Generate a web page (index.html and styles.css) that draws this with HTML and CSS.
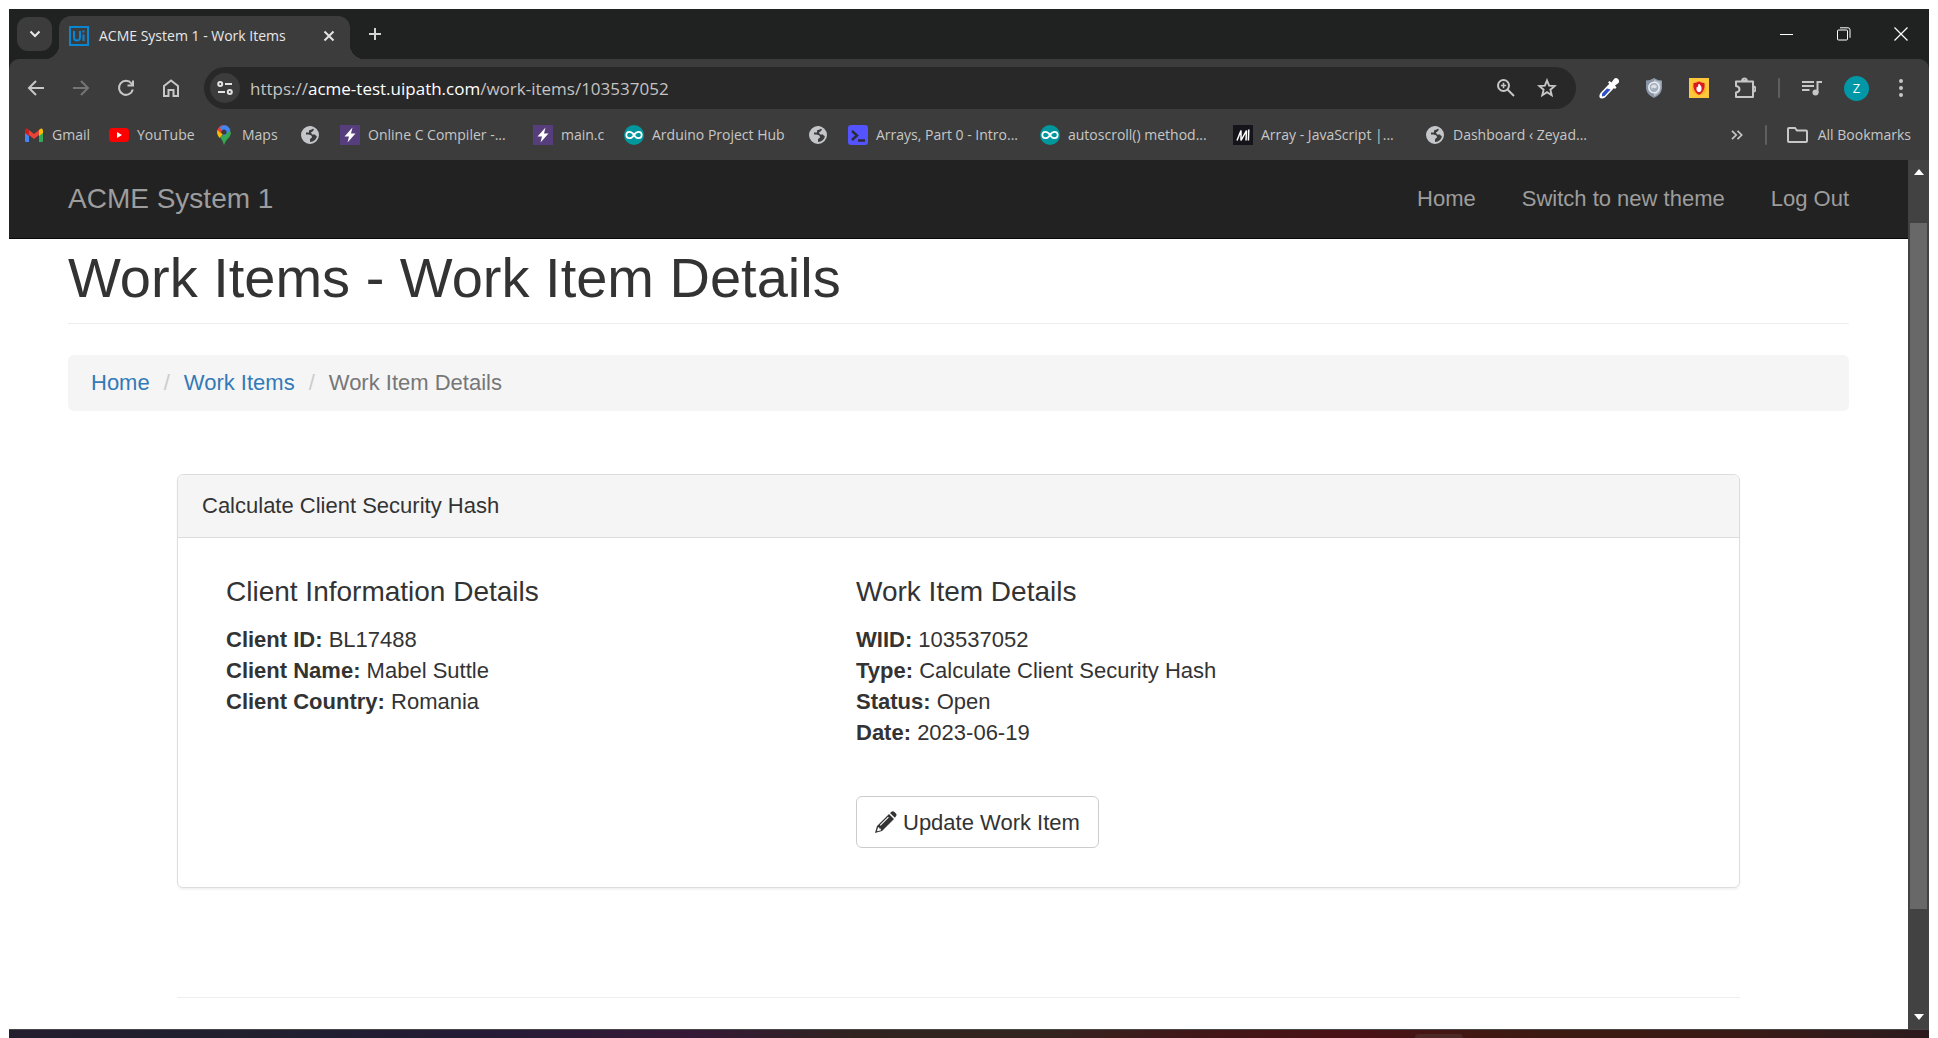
FILE: index.html
```html
<!DOCTYPE html>
<html lang="en">
<head>
<meta charset="utf-8">
<title>ACME System 1 - Work Items</title>
<link rel="stylesheet" href="styles.css">
</head>
<body>
<svg class="defs" aria-hidden="true">
  <symbol id="globe" viewBox="0 0 20 20"><circle cx="10" cy="10" r="8" fill="#3c3c3c" stroke="#c4c6ca" stroke-width="2"/><path fill="#c4c6ca" d="M2 8c1-4 5-7 10-6.500l1 2c-1 1.500-3 1-4 2v2H6v2c3 0 6 0 6 3-1 1-2 1-2 2v3C5 18 1 14 2 8zM14 3.500c3 2 4 5 4 7-1.500 1-2.500 0-3-1h-3l-1-2c1.500-1 3-2 3-4z"/></symbol>
  <symbol id="bolt" viewBox="0 0 20 20"><path fill="#563d7c" d="M0 0h20v20H0z"/><path fill="#fff" d="M12.500 2.500 4.500 11.500h4.500L7.500 17.500 15.500 8.500H11z"/></symbol>
  <symbol id="arduino" viewBox="0 0 20 20"><circle cx="10" cy="10" r="10" fill="#00979d"/><path fill="none" stroke="#fff" stroke-width="1.700" d="M10 10C8.500 7.500 7.200 6.800 5.500 6.800a3.200 3.200 0 0 0 0 6.400C7.200 13.200 8.500 12.500 10 10s2.800-3.200 4.500-3.200a3.200 3.200 0 0 1 0 6.400C12.800 13.200 11.500 12.500 10 10z"/></symbol>
</svg>
<div class="window">
  <header class="tabstrip">
    <button class="tab-search" aria-label="Search tabs"><svg width="12" height="8" viewBox="0 0 12 8"><path d="m1.500 1.500 4.500 4.500 4.500-4.500" fill="none" stroke="#e8e8e8" stroke-width="2"/></svg></button>
    <div class="tab">
      <svg width="20" height="20" viewBox="0 0 20 20" fill="none" stroke="#0a85d1" stroke-width="2"><path d="M1 1h18v18H1z"/><path d="M5 5v6.500a3 3 0 0 0 6 0V5M14.500 8.500V15M14.500 4.500v2"/></svg>
      <span class="tab-title">ACME System 1 - Work Items</span>
      <button class="plain" aria-label="Close tab"><svg width="12" height="12" viewBox="0 0 12 12"><path d="m1.500 1.500 9 9m0-9-9 9" stroke="#e3e3e3" stroke-width="2"/></svg></button>
    </div>
    <button class="plain" aria-label="New tab"><svg width="14" height="14" viewBox="0 0 14 14"><path d="M7 1v12M1 7h12" stroke="#d3d3d3" stroke-width="2"/></svg></button>
    <div class="window-controls">
      <button class="plain" aria-label="Minimize"><svg width="14" height="14" viewBox="0 0 14 14"><path d="M0 7.500h13" stroke="#fff"/></svg></button>
      <button class="plain" aria-label="Restore"><svg width="14" height="14" viewBox="0 0 14 14" fill="none" stroke="#fff"><rect x=".5" y="3" width="10" height="10" rx="1"/><path d="M3 .800h8a2 2 0 0 1 2 2v8"/></svg></button>
      <button class="plain" aria-label="Close"><svg width="14" height="14" viewBox="0 0 14 14"><path d="m.5.500 13 13m0-13-13 13" stroke="#fff" stroke-width="1.200"/></svg></button>
    </div>
  </header>

  <div class="toolbar-frame">
  <div class="toolbar">
    <nav class="nav-buttons" aria-label="Browser">
      <button class="plain" aria-label="Back"><svg width="18" height="16" viewBox="0 0 18 16"><path d="M17 8H2m7-7L2 8l7 7" fill="none" stroke="#c7c7c7" stroke-width="2"/></svg></button>
      <button class="plain" aria-label="Forward"><svg width="18" height="16" viewBox="0 0 18 16"><path d="M1 8h15M9 1l7 7-7 7" fill="none" stroke="#757575" stroke-width="2"/></svg></button>
      <button class="plain" aria-label="Reload"><svg width="18" height="18" viewBox="0 0 18 18"><path d="M15.800 10.500A7 7 0 1 1 14.500 4.500L16 6.500M16 1.500v5h-5.500" fill="none" stroke="#c7c7c7" stroke-width="2"/></svg></button>
      <button class="plain" aria-label="Home"><svg width="18" height="18" viewBox="0 0 18 18"><path d="M2 17V7l7-5.500L16 7v10h-4.500v-6h-5v6z" fill="none" stroke="#c7c7c7" stroke-width="2"/></svg></button>
    </nav>
    <div class="address">
      <button class="site-info" aria-label="Site information"><svg width="16" height="14" viewBox="0 0 16 14" fill="none" stroke="#e3e3e3" stroke-width="2"><circle cx="3.200" cy="3" r="2"/><path d="M8 3h7M1 11h7"/><circle cx="12.800" cy="11" r="2"/></svg></button>
      <p class="url">https://<span>acme-test.uipath.com</span>/work-items/103537052</p>
      <button class="plain" aria-label="Zoom"><svg width="18" height="18" viewBox="0 0 18 18" fill="none" stroke="#c7c7c7" stroke-width="2"><circle cx="6.500" cy="6.500" r="5.500"/><path d="m10.500 10.500 6.500 6.500"/><path d="M3.800 6.500h5.400M6.500 3.800v5.400" stroke-width="1.600"/></svg></button>
      <button class="plain" aria-label="Bookmark this page"><svg width="20" height="20" viewBox="0 0 20 20"><path d="m10 2.500 2.100 5.200 5.500.400-4.200 3.600 1.300 5.500L10 14.200l-4.700 3 1.300-5.500-4.200-3.600 5.500-.400z" fill="none" stroke="#c7c7c7" stroke-width="1.900"/></svg></button>
    </div>
    <div class="extensions">
      <button class="plain" aria-label="Color picker"><svg width="20" height="22" viewBox="0 0 20 22"><path d="m11 6 4.500 4.500L6 20.500q-3 1.500-5 .5-1.500-2 .5-5z" fill="#fff"/><path d="m8 11.500 3.500 1-6 6.500-2.500.500v-3z" fill="#2f4fc4"/><path d="M9 5.500 10.500 4l2 1.500L15 2q2-2 4 0t.5 4L16 8.500l1.500 2L16 12z" fill="#fff"/></svg></button>
      <button class="plain" aria-label="Privacy shield"><svg width="20" height="20" viewBox="-1 0 20 20"><path d="M9 0q4 2.500 8 2.500v8Q16 17 9 20 2 17 1 10.500v-8Q5 2.500 9 0z" fill="#8b97a8"/><path d="M9 1.500q3 2 6.500 2.200v6.300Q15 15.500 9 18.500z" fill="#b9c1cc"/><circle cx="9" cy="9.500" r="5.200" fill="#a4aebb" stroke="#e9edf2" stroke-width="1.500"/><path d="M6 8q3-3 6 0-1 3-3 2t-2 2z" fill="#dce1e8"/></svg></button>
      <button class="plain" aria-label="Ad blocker"><svg width="20" height="20" viewBox="0 0 20 20"><path d="M0 0h20v20H0z" fill="#ffc83a"/><circle cx="10" cy="10" r="7" fill="#ffad2e"/><path d="M10 3.500q3 1.500 5.500 1.500 1 8-5.500 12Q3.500 13 4.500 5 7 5 10 3.500z" fill="#d9191f"/><path d="M7.500 9.500 9 8.500l.5-2.500h1l2 3v3q-.5 2-2.500 2.200-2-.2-2.500-2.200z" fill="#fff"/></svg></button>
      <button class="plain" aria-label="Extensions"><svg width="22" height="22" viewBox="0 0 22 22"><path d="M2 4.500h17V20H2v-4.500q3.500-.5 3.500-3.200T2 9zM8 4q.5-2.500 2.500-2.500T13 4zM19 9.500q2.500 0 2.500 2.500T19 14.500" fill="none" stroke="#c7c7c7" stroke-width="2" stroke-linejoin="round"/></svg></button>
    </div>
    <span class="divider"></span>
    <button class="plain" aria-label="Media controls"><svg width="20" height="16" viewBox="0 0 20 16"><path d="M0 2h12M0 6h12M0 10h7.500M15.500 13V2H20" fill="none" stroke="#c7c7c7" stroke-width="2"/><circle cx="13.500" cy="12.500" r="3" fill="#c7c7c7"/></svg></button>
    <button class="avatar" aria-label="Profile">Z</button>
    <button class="plain" aria-label="Menu"><svg width="4" height="18" viewBox="0 0 4 18" fill="#c7c7c7"><circle cx="2" cy="2" r="2"/><circle cx="2" cy="9" r="2"/><circle cx="2" cy="16" r="2"/></svg></button>
  </div>
  </div>

  <nav class="bookmarks" aria-label="Bookmarks">
    <div class="bookmark-list">
      <a href="#"><svg width="20" height="20" viewBox="0 0 20 20"><path d="M1 5v11q0 1 1 1h3V8z" fill="#4285f4"/><path d="M19 5v11q0 1-1 1h-3V8z" fill="#34a853"/><path d="M5 5v5l5 4 5-4V5l-5 4z" fill="#ea4335"/><path d="M1 5.500V8l4 3V5Q1.500 2 1 5.500z" fill="#c5221f"/><path d="M19 5.500V8l-4 3V5q3.500-3 4 .5z" fill="#fbbc04"/></svg>Gmail</a>
      <a href="#"><svg width="20" height="20" viewBox="0 0 20 20"><rect y="3" width="20" height="14" rx="3.500" fill="#f00"/><path d="m8 7 5 3-5 3z" fill="#fff"/></svg>YouTube</a>
      <a href="#"><svg width="20" height="20" viewBox="0 0 20 20"><path d="M10 20q-1-4-4-8l9-7q2 1 2 3.500Q16 12 13 14.500 11 17 10 20z" fill="#34a853"/><path d="M4 4.500 9 9l-3.500 4Q3 10 3 7.500T4 4.500z" fill="#fbbc04"/><path d="m3.500 5 3 3L12 1q-2-1-4.500-.5T3.500 5z" fill="#ea4335"/><path d="M6 2q2-2 5-1.800T16.500 5L10 11 8 7z" fill="#4285f4"/><circle cx="10" cy="7" r="2.600" fill="#3c3c3c"/></svg>Maps</a>
      <a href="#" aria-label="Untitled bookmark"><svg width="20" height="20"><use href="#globe"/></svg></a>
      <a href="#"><svg width="20" height="20"><use href="#bolt"/></svg>Online C Compiler -...</a>
      <a href="#"><svg width="20" height="20"><use href="#bolt"/></svg>main.c</a>
      <a href="#"><svg width="20" height="20"><use href="#arduino"/></svg>Arduino Project Hub</a>
      <a href="#" aria-label="Untitled bookmark"><svg width="20" height="20"><use href="#globe"/></svg></a>
      <a href="#"><svg width="20" height="20" viewBox="0 0 20 20"><rect width="20" height="20" rx="3" fill="#5353ff"/><path d="m4 6 5 4.500L4 15M10 15.500h7" fill="none" stroke="#2b2b3a" stroke-width="2.400"/></svg>Arrays, Part 0 - Intro...</a>
      <a href="#"><svg width="20" height="20"><use href="#arduino"/></svg>autoscroll() method...</a>
      <a href="#"><svg width="20" height="20" viewBox="0 0 20 20"><path d="M0 0h20v20H0z" fill="#15141a"/><path d="m4 15.500 4-10v10l5.500-10-.5 10M15.800 4.500l-.4 11" fill="none" stroke="#fff" stroke-width="1.500"/></svg>Array - JavaScript |...</a>
      <a href="#"><svg width="20" height="20"><use href="#globe"/></svg>Dashboard ‹ Zeyad...</a>
    </div>
    <button class="plain" aria-label="More bookmarks"><svg width="12" height="10" viewBox="0 0 12 10"><path d="m1 .800 4.200 4.200L1 9.200M6.500.800 10.700 5 6.500 9.200" fill="none" stroke="#c7c7c7" stroke-width="1.700"/></svg></button>
    <span class="divider"></span>
    <a class="all-bookmarks" href="#"><svg width="21" height="16" viewBox="0 0 21 16"><path d="M1 13V2q0-1 1-1h6l2 2.500h9q1 0 1 1V14q0 1-1 1H2q-1 0-1-1z" fill="none" stroke="#c7c7c7" stroke-width="2"/></svg>All Bookmarks</a>
  </nav>

  <div class="viewport">
    <div class="page">
      <nav class="navbar" aria-label="Site">
        <a class="brand" href="#">ACME System 1</a>
        <a href="#">Home</a>
        <a href="#">Switch to new theme</a>
        <a href="#">Log Out</a>
      </nav>
      <main class="container">
        <h1>Work Items - Work Item Details</h1>
        <ol class="breadcrumb">
          <li><a href="#">Home</a></li>
          <li><a href="#">Work Items</a></li>
          <li>Work Item Details</li>
        </ol>
        <div class="content">
          <section class="panel">
            <h2>Calculate Client Security Hash</h2>
            <div class="panel-body">
              <div>
                <h3>Client Information Details</h3>
                <p><b>Client ID:</b> BL17488</p>
                <p><b>Client Name:</b> Mabel Suttle</p>
                <p><b>Client Country:</b> Romania</p>
              </div>
              <div>
                <h3>Work Item Details</h3>
                <p><b>WIID:</b> 103537052</p>
                <p><b>Type:</b> Calculate Client Security Hash</p>
                <p><b>Status:</b> Open</p>
                <p><b>Date:</b> 2023-06-19</p>
                <button class="update"><svg width="22" height="22" viewBox="0 0 22 22" fill="#333"><path d="m15 2 1.500-1.300q1.500-1.200 3 .3l1.200 1.200q1.500 1.500.3 3L19.800 6.800z"/><path fill-rule="evenodd" d="m14 3 5 5L7 20 0 22l2-7zM3 16.500l-1 3.300.500.500 3.500-1-.3-1.500-1.400-.2-.2-1.300zM13 5.800 4.800 14l.8.800L13.800 6.600z"/></svg>Update Work Item</button>
              </div>
            </div>
          </section>
          <hr>
        </div>
      </main>
    </div>
    <div class="scrollbar">
      <svg width="10" height="6" viewBox="0 0 10 6"><path d="M5 0l5 6H0z" fill="#fff"/></svg>
      <div class="track"><div class="thumb"></div></div>
      <svg width="10" height="6" viewBox="0 0 10 6"><path d="M0 0h10L5 6z" fill="#fff"/></svg>
    </div>
  </div>
  <footer class="taskbar"><span></span></footer>
</div>
</body>
</html>
```
FILE: styles.css
```css
* { box-sizing: border-box; }
body { margin: 0; background: #fff; font-family: "Liberation Sans", Arial, sans-serif; color: #333; }
a { text-decoration: none; color: inherit; }
h1, h2, h3, p, ol { margin: 0; padding: 0; font-weight: 400; }
svg { display: block; flex: none; }
button { font: inherit; color: inherit; border: 0; padding: 0; background: none; }
.plain { display: flex; align-items: center; justify-content: center; }
.defs { position: absolute; width: 0; height: 0; }

.window { display: flex; flex-direction: column; min-height: 100vh; padding: 9px 9px 0; }

/* Tab strip */
.tabstrip { display: flex; align-items: center; height: 50px; padding: 0 15px 0 8px; background: #202221; font-family: "Open Sans", sans-serif; }
.tab-search { display: flex; align-items: center; justify-content: center; width: 35px; height: 34px; border-radius: 11px; background: #3c3c3c; margin: 0 7px 0 0; }
.tab { position: relative; display: flex; align-items: center; align-self: flex-end; gap: 10px; width: 291px; height: 43px; padding: 0 15px 4px 10px; margin-right: 18px; border-radius: 12px 12px 0 0; background: #3c3c3c; color: #e8e8e8; font-size: 14px; }
.tab::before, .tab::after { content: ""; position: absolute; bottom: 0; width: 14px; height: 14px; }
.tab::before { right: 100%; background: radial-gradient(circle at 0 0, transparent 14px, #3c3c3c 14px); }
.tab::after { left: 100%; background: radial-gradient(circle at 100% 0, transparent 14px, #3c3c3c 14px); }
.tab-title { flex: 1; white-space: nowrap; }
.window-controls { display: flex; gap: 43px; margin-left: auto; padding: 0 6px 0 0; }

/* Toolbar */
.toolbar-frame { background: #202221; }
.toolbar { display: flex; align-items: center; height: 58px; padding: 0 26px 0 18px; border-radius: 10px 10px 0 0; background: #3c3c3c; font-family: "Open Sans", sans-serif; }
.nav-buttons { display: flex; gap: 27px; margin-right: 24px; }
.address { display: flex; align-items: center; flex: 1; height: 42px; padding: 0 19px 0 6px; border-radius: 21px; background: #282828; }
.site-info { display: flex; align-items: center; justify-content: center; width: 30px; height: 30px; border-radius: 50%; background: #3c3c3c; }
.url { flex: 1; margin-left: 10px; font-size: 17px; color: #c4c4c4; white-space: nowrap; }
.url span { color: #fff; }
.address .plain + .plain { margin-left: 22px; }
.extensions { display: flex; align-items: center; gap: 25px; margin-left: 23px; }
.divider { width: 2px; height: 20px; border-radius: 1px; background: #5f5f5f; }
.toolbar .divider { margin: 0 22px; }
.avatar { width: 25px; height: 25px; margin: 0 30px 0 22px; border-radius: 50%; background: #0097a7; color: #fff; font-size: 13px; }

/* Bookmarks */
.bookmarks { display: flex; align-items: center; height: 43px; padding: 0 18px 8px 15px; background: #3c3c3c; color: #c7c7c7; font-family: "Open Sans", sans-serif; font-size: 14px; }
.bookmarks a { display: flex; align-items: center; gap: 8px; white-space: nowrap; }
.bookmarks .all-bookmarks { gap: 10px; }
.bookmark-list { flex: 1; display: grid; grid-template-columns: 85px 105px 86px 40px 193px 91px 184px 40px 192px 193px 192px auto; }
.bookmarks .divider { margin: 0 20px 0 22px; }

/* Web page */
.viewport { flex: 1; display: flex; }
.page { flex: 1; font-size: 22px; line-height: 31px; }
.navbar { display: flex; align-items: center; gap: 46px; height: 79px; padding: 0 59px 2px; background: #222; border-bottom: 1px solid #080808; color: #9d9d9d; }
.brand { margin-right: auto; font-size: 28px; }
.container { padding: 0 59px; }
h1 { padding: 13px 0 19px; border-bottom: 1px solid #eee; font-size: 56px; line-height: 52px; }
.breadcrumb { display: flex; margin: 31px 0 63px; padding: 12px 23px 13px; border-radius: 6px; background: #f5f5f5; list-style: none; color: #777; }
.breadcrumb a { color: #337ab7; }
.breadcrumb li + li::before { content: "/"; padding: 0 14px; color: #ccc; }
.content { padding: 0 109px; }
.panel { border: 1px solid #ddd; border-radius: 6px; box-shadow: 0 2px 2px rgba(0, 0, 0, .05); }
h2 { padding: 15px 24px 16px; border-bottom: 1px solid #ddd; border-radius: 5px 5px 0 0; background: #f5f5f5; font-size: 22px; line-height: 31px; }
.panel-body { display: grid; grid-template-columns: 630px 1fr; padding: 37px 48px 39px; }
h3 { margin-bottom: 15px; font-size: 28px; line-height: 34px; }
.update { display: flex; align-items: center; gap: 6px; height: 52px; margin-top: 48px; padding: 0 18px; border: 1px solid #ccc; border-radius: 6px; background: #fff; }
hr { margin: 109px 0 31px; border: 0; border-top: 1px solid #eee; }

/* Scrollbar and taskbar edge */
.scrollbar { display: flex; flex-direction: column; align-items: center; width: 21px; padding: 9px 2px; background: #424242; }
.track { flex: 1; width: 17px; padding: 48px 0 105px; display: flex; }
.thumb { flex: 1; background: #686868; }
.taskbar { height: 9px; border-top: 1px solid #484848; background: linear-gradient(90deg, #241d2e 0%, #20202e 12%, #241b36 24%, #351838 35%, #30231f 44%, #342420 54%, #421618 62%, #4a1216 70%, #3c1a12 80%, #3a1a16 90%, #2c1a1e 100%); }
.taskbar span { display: block; width: 48px; height: 4px; margin: 4px 0 0 1406px; border-radius: 4px 4px 0 0; background: #4c2826; }
```
